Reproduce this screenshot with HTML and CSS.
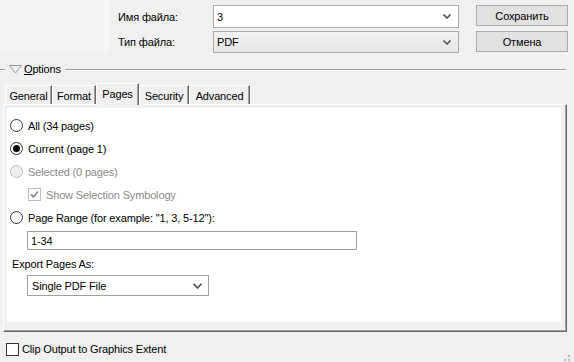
FILE: index.html
```html
<!DOCTYPE html>
<html lang="ru">
<head>
  <meta charset="UTF-8">
  <title>Export Map</title>
  <link rel="stylesheet" href="styles.css">
</head>
<body>
  <!-- File name / type -->
  <div class="top">
    <div class="blank"></div>
    <div class="fields">
      <div class="field-row">
        <span class="lbl">Имя файла:</span>
        <div class="combo edit">
          <span>3</span>
          <svg class="chev" width="8" height="5" viewBox="0 0 8 5"><polyline points="0.5,0.5 4,4 7.5,0.5" fill="none" stroke="#555" stroke-width="1.6"/></svg>
        </div>
      </div>
      <div class="field-row">
        <span class="lbl">Тип файла:</span>
        <div class="combo drop">
          <span>PDF</span>
          <svg class="chev" width="8" height="5" viewBox="0 0 8 5"><polyline points="0.5,0.5 4,4 7.5,0.5" fill="none" stroke="#555" stroke-width="1.6"/></svg>
        </div>
      </div>
    </div>
    <div class="buttons">
      <div class="btn">Сохранить</div>
      <div class="btn">Отмена</div>
    </div>
  </div>

  <!-- Options header -->
  <div class="options">
    <span class="dash"></span>
    <svg class="tri" width="13" height="9" viewBox="0 0 13 9"><polygon points="0.5,0.5 12.5,0.5 6.5,8" fill="none" stroke="#9a9a9a"/></svg>
    <span class="opt-text"><u>O</u>ptions</span>
    <span class="rule"></span>
  </div>

  <!-- Tabs -->
  <div class="tabs">
    <div class="tab t-general">General</div>
    <div class="tab t-format">Format</div>
    <div class="tab active t-pages">Pages</div>
    <div class="tab t-security">Security</div>
    <div class="tab t-advanced">Advanced</div>
  </div>

  <div class="panel">
    <div class="page">
      <div class="opt-row"><span class="radio"></span>All (34 pages)</div>
      <div class="opt-row"><span class="radio checked"></span>Current (page 1)</div>
      <div class="opt-row disabled"><span class="radio"></span>Selected (0 pages)</div>
      <div class="opt-row disabled sub">
        <span class="check">
          <svg width="11" height="11" viewBox="0 0 11 11"><polyline points="2,5.5 4.5,8 9,2.5" fill="none" stroke="#8c8c8c" stroke-width="1.8"/></svg>
        </span>Show Selection Symbology
      </div>
      <div class="opt-row"><span class="radio"></span>Page Range (for example: "1, 3, 5-12"):</div>
      <div class="text-input">1-34</div>
      <div class="export-lbl">Export Pages As:</div>
      <div class="select">
        <span>Single PDF File</span>
        <svg class="chev" width="9" height="6" viewBox="0 0 9 6"><polyline points="0.5,0.8 4.5,4.8 8.5,0.8" fill="none" stroke="#555" stroke-width="1.8"/></svg>
      </div>
    </div>
  </div>

  <div class="bottom">
    <span class="check plain"></span>Clip Output to Graphics Extent
  </div>

  <svg class="grip" width="6" height="6" viewBox="0 0 6 6">
    <rect x="4" y="0" width="2" height="2" fill="#b8b8b8"/>
    <rect x="0" y="4" width="2" height="2" fill="#b8b8b8"/>
    <rect x="4" y="4" width="2" height="2" fill="#b8b8b8"/>
  </svg>
</body>
</html>
```

FILE: styles.css
```css
* {
  box-sizing: border-box;
}

body {
  margin: 0;
  width: 574px;
  height: 362px;
  overflow: hidden;
  position: relative;
  background: #f0f0f0;
  font-family: "Liberation Sans", Arial, sans-serif;
  font-size: 11px;
  letter-spacing: -0.15px;
  color: #000;
}

/* top area */

.top {
  display: flex;
  height: 53px;
}

.blank {
  width: 110px;
  height: 53px;
  background: #f4f4f4;
}

.fields {
  display: flex;
  flex-direction: column;
  gap: 3px;
  padding-top: 5px;
  margin-left: 8px;
}

.field-row {
  display: flex;
  align-items: center;
}

.lbl {
  width: 95px;
}

.combo {
  width: 246px;
  height: 22px;
  display: flex;
  align-items: center;
  justify-content: space-between;
  padding: 0 7px 0 3px;
  border: 1px solid #ababab;
}

.combo.edit {
  height: 23px;
  background: #fff;
}

.combo.drop {
  background: linear-gradient(#f2f2f2, #e6e6e6);
  border-color: #acacac;
}

.buttons {
  display: flex;
  flex-direction: column;
  gap: 5px;
  padding-top: 5px;
  margin-left: 17px;
}

.btn {
  width: 92px;
  height: 21px;
  border: 1px solid #adadad;
  background: #e1e1e1;
  display: flex;
  align-items: center;
  justify-content: center;
}

/* options header */

.options {
  display: flex;
  align-items: center;
  height: 16px;
  margin-top: 8px;
}

.dash {
  width: 5px;
  height: 1px;
  background: #a0a0a0;
  box-shadow: 0 1px 0 #fff;
}

.tri {
  margin-left: 4px;
}

.opt-text {
  margin-left: 2px;
}

.rule {
  width: 501px;
  height: 1px;
  margin-left: 4px;
  background: #a0a0a0;
  box-shadow: 0 1px 0 #fff;
}

/* tabs */

.tabs {
  display: flex;
  align-items: flex-end;
  height: 22px;
  margin-top: 6px;
  padding-left: 5px;
  position: relative;
  z-index: 1;
  margin-bottom: -1px;
}

.tab {
  height: 19px;
  margin-bottom: 1px;
  display: flex;
  align-items: center;
  justify-content: center;
  border-left: 1px solid #fff;
  border-top: 1px solid #fff;
  border-right: 1px solid #696969;
  box-shadow: inset -1px 0 0 #a0a0a0;
  background: #f0f0f0;
  padding-top: 1px;
}

.tab.active {
  height: 22px;
  margin-bottom: 0;
  padding-bottom: 2px;
}

.t-general { width: 47px; }
.t-format { width: 44px; }
.t-pages { width: 43px; }
.t-security { width: 50px; }
.t-advanced { width: 61px; }

/* tab page */

.panel {
  width: 564px;
  height: 228px;
  margin-left: 3px;
  border-left: 1px solid #fff;
  border-top: 1px solid #fff;
  border-right: 1px solid #696969;
  border-bottom: 1px solid #696969;
  box-shadow: inset -1px -1px 0 #a0a0a0;
  padding: 3px 5px 9px 3px;
}

.page {
  height: 100%;
  background: #fff;
  padding: 6px 0 0 3px;
}

.opt-row {
  height: 23px;
  display: flex;
  align-items: center;
}

.opt-row.disabled {
  color: #8a8a8a;
}

.opt-row.sub {
  padding-left: 18px;
}

.radio {
  width: 13px;
  height: 13px;
  border: 1px solid #333;
  border-radius: 50%;
  background: #fff;
  margin-right: 5px;
  display: flex;
  align-items: center;
  justify-content: center;
}

.radio.checked::after {
  content: "";
  width: 7px;
  height: 7px;
  border-radius: 50%;
  background: #000;
}

.disabled .radio {
  border-color: #bcbcbc;
  background: #f0f0f0;
}

.check {
  width: 13px;
  height: 13px;
  border: 1px solid #bcbcbc;
  background: #fff;
  margin-right: 5px;
  display: flex;
  align-items: center;
  justify-content: center;
}

.check.plain {
  border-color: #333;
  margin-right: 3px;
}

.text-input {
  width: 330px;
  height: 19px;
  margin: 2px 0 0 17px;
  border: 1px solid #a0a0a0;
  padding-left: 3px;
  display: flex;
  align-items: center;
}

.export-lbl {
  margin: 7px 0 0 2px;
  line-height: 14px;
}

.select {
  width: 182px;
  height: 21px;
  margin: 4px 0 0 17px;
  border: 1px solid #a0a0a0;
  display: flex;
  align-items: center;
  justify-content: space-between;
  padding: 0 6px 0 4px;
}

/* bottom */

.bottom {
  display: flex;
  align-items: center;
  margin-top: 10px;
  padding-left: 6px;
  height: 14px;
}

.grip {
  position: absolute;
  right: 4px;
  bottom: 1px;
}
```
